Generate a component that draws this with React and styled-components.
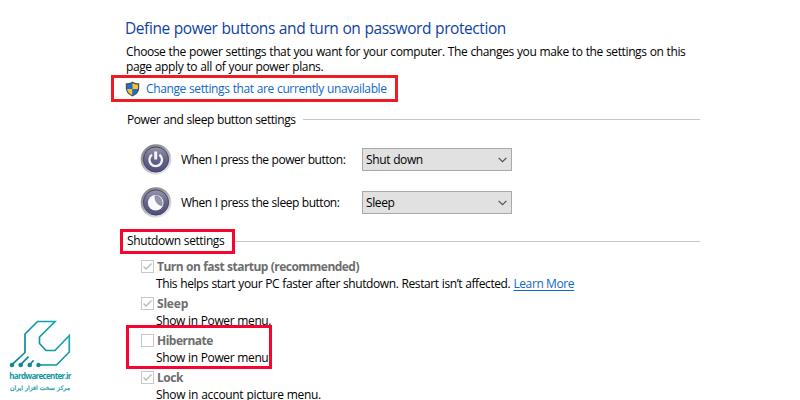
import React from 'react'
import styled, { createGlobalStyle } from 'styled-components'

const GlobalStyle = createGlobalStyle`
  body {
    margin: 0;
    background: #fff;
    overflow: hidden;
  }
`

const Page = styled.div`
  position: relative;
  box-sizing: border-box;
  width: 800px;
  height: 400px;
  padding: 16px 100px 0 126px;
  overflow: hidden;
  background: #fff;
  color: #000;
  font-family: 'Open Sans', 'Noto Sans', sans-serif;
  font-size: 12px;
  line-height: 15px;
  white-space: nowrap;
`

const Text = styled.span`
  letter-spacing: ${({ $track = -0.39 }) => $track}px;
  word-spacing: 0.4px;
`

const Title = styled.h1`
  margin: 0 0 0 -1px;
  height: 28px;
  color: #0f3f9f;
  font-size: 15.5px;
  font-weight: 400;
  line-height: 24px;
`

const Intro = styled.p`
  margin: 0;
  height: 31px;
`

const AdminLink = styled.a`
  display: flex;
  align-items: center;
  box-sizing: border-box;
  width: 287px;
  height: 27px;
  margin-left: -15px;
  padding-left: 11px;
  gap: 6px;
  border: 3px solid #ed1c24;
  color: #0f66cc;

  svg {
    flex-shrink: 0;
  }
`

const SectionTitle = styled.h2`
  display: flex;
  align-items: center;
  height: 16px;
  margin: ${({ $top }) => $top}px 0 0 1px;
  gap: ${({ $gap }) => $gap}px;
  font-size: 12px;
  font-weight: 400;

  &::after {
    content: '';
    flex: 1;
    height: 1px;
    background: #c6c6c6;
  }
`

const Highlighted = styled.span`
  box-sizing: border-box;
  height: 25px;
  width: 115px;
  margin-left: -7px;
  padding-left: 4px;
  border: 3px solid #f5052f;
  line-height: 18px;
`

const ButtonRow = styled.div`
  display: flex;
  align-items: center;
  height: 43px;
  padding-left: 14px;
`

const ButtonLabel = styled.span`
  width: 181px;
  margin-left: 9px;
`

const Select = styled.div`
  display: flex;
  align-items: center;
  justify-content: space-between;
  box-sizing: border-box;
  width: 150px;
  height: 23px;
  padding: 0 4px 0 3px;
  border: 1px solid #a9a9a9;
  background: #e1e1e1;
`

const ButtonList = styled.div`
  padding-top: 11px;
`

const Options = styled.div`
  padding: 9px 0 0 15px;
`

const Option = styled.div`
  position: relative;
  height: 37px;
`

const OptionHead = styled.div`
  display: flex;
  align-items: center;
  height: 17px;
  gap: 3px;
  color: #6d6d6d;
  font-weight: 700;
`

const OptionNote = styled.div`
  height: 17px;
  padding-left: 15px;
  line-height: 17px;
`

const Checkbox = styled.span`
  display: flex;
  box-sizing: border-box;
  width: 13px;
  height: 13px;
  border: 1px solid #c8c8c8;
`

const Marker = styled.div`
  position: absolute;
  top: -7px;
  left: -15px;
  box-sizing: border-box;
  width: 146px;
  height: 44px;
  border: 3px solid #f5052f;
`

const LearnMore = styled.a`
  color: #0f66cc;
  letter-spacing: -0.4px;
  text-decoration: underline;
  text-underline-offset: 2px;
`

const Watermark = styled.div`
  position: absolute;
  left: 8px;
  top: 318px;
  width: 64px;
  color: #0f97a5;
  text-align: center;
`

const SiteName = styled.div`
  height: 12px;
  margin-top: -1px;
  font-size: 8px;
  font-weight: 700;
  line-height: 12px;
  letter-spacing: -0.68px;
`

const SiteTagline = styled.div`
  font-family: 'DejaVu Sans', sans-serif;
  font-size: 6.2px;
  line-height: 12px;
  -webkit-text-stroke: 0.2px #0f97a5;
`

const Shield = () => (
  <svg width="15" height="16" viewBox="0 0 15 16">
    <path d="M7.5 .5C5.5 2 3 2.3.8 2.3V7c0 4 3 7 6.700 8.500 3.700-1.500 6.700-4.500 6.700-8.500V2.300C12 2.300 9.500 2 7.500.5z" fill="#4a4f55" />
    <path d="M7.500 2C6 3 4 3.500 2 3.500V8h5.500z" fill="#1a70cf" />
    <path d="M7.500 2C9 3 11 3.500 13 3.500V8H7.500z" fill="#fcc133" />
    <path d="M2 8c.3 3 2.500 5 5.500 6.300V8z" fill="#fcc133" />
    <path d="M13 8c-.3 3-2.500 5-5.500 6.300V8z" fill="#1a70cf" />
  </svg>
)

const Orb = ({ id, children }) => (
  <svg width="32" height="32" viewBox="0 0 32 32">
    <defs>
      <linearGradient id={`${id}-rim`} x1=".1" y1="0" x2=".7" y2="1">
        <stop offset="0" stopColor="#77777d" />
        <stop offset=".5" stopColor="#a8a8ae" />
        <stop offset="1" stopColor="#f0f0f4" />
      </linearGradient>
      <linearGradient id={`${id}-face`} x1="0" y1="0" x2="0" y2="1">
        <stop offset="0" stopColor="#9696ac" />
        <stop offset=".5" stopColor="#65658a" />
        <stop offset="1" stopColor="#4e4e79" />
      </linearGradient>
    </defs>
    <circle cx="16" cy="15.500" r="15.300" fill={`url(#${id}-rim)`} />
    <circle cx="16" cy="15.500" r="12.600" fill={`url(#${id}-face)`} stroke="#454566" />
    {children}
  </svg>
)

const PowerIcon = () => (
  <Orb id="power">
    <path d="M12 10.800a6.300 6.300 0 1 0 7.400 0" fill="none" stroke="#f4f4f8" strokeWidth="2.300" />
    <path d="M15.700 7.500v8" stroke="#f4f4f8" strokeWidth="3" />
  </Orb>
)

const SleepIcon = () => (
  <Orb id="sleep">
    <circle cx="15.700" cy="15.700" r="7.800" fill="#fafafc" />
    <path d="M15 9C19.500 8 23.300 13 21.800 18.800 17.800 18 14.500 14 15 9z" fill="#9696aa" stroke="#74748f" strokeWidth=".6" />
  </Orb>
)

const Chevron = () => (
  <svg width="9" height="6" viewBox="0 0 9 6">
    <path d="M.6.800 4.500 4.700 8.400.8" fill="none" stroke="#505050" strokeWidth="1.200" />
  </svg>
)

const Check = () => (
  <svg width="11" height="11" viewBox="0 0 11 11">
    <path d="M1.500 5.500 4 8l5.500-5.500" fill="none" stroke="#b9b9b9" strokeWidth="1.300" />
  </svg>
)

const Logo = () => (
  <svg width="64" height="50" viewBox="8 318 64 50">
    <defs>
      <linearGradient id="teal" gradientUnits="userSpaceOnUse" x1="10" y1="366" x2="70" y2="320">
        <stop offset="0" stopColor="#0c7d8e" />
        <stop offset="1" stopColor="#18aeb4" />
      </linearGradient>
    </defs>
    <g fill="none" stroke="url(#teal)" strokeWidth="1.700">
      <path d="M12 364.700 25 352.500V334l12.500-12.500H55L39.500 337v6.500l6.500 7h9L69.300 335.500V352L56.500 365H38.500" />
      <path d="M20.700 364.700l7.800-8M29.700 364.700l4-4.500" />
    </g>
    <g fill="#0e8796">
      <circle cx="12" cy="365" r="2.300" />
      <circle cx="20.700" cy="365" r="2.300" />
      <circle cx="29.700" cy="365" r="2.300" />
      <circle cx="38.500" cy="365" r="2.200" />
    </g>
  </svg>
)

const buttons = [
  { label: 'When I press the power button:', value: 'Shut down', Icon: PowerIcon },
  { label: 'When I press the sleep button:', value: 'Sleep', Icon: SleepIcon },
]

const options = [
  {
    name: 'Turn on fast startup (recommended)',
    note: 'This helps start your PC faster after shutdown. Restart isn’t affected.',
    checked: true,
    link: 'Learn More',
    track: -0.54,
    noteTrack: -0.41,
  },
  { name: 'Sleep', note: 'Show in Power menu.', checked: true, track: -0.2 },
  { name: 'Hibernate', note: 'Show in Power menu', marked: true, track: -0.5 },
  { name: 'Lock', note: 'Show in account picture menu.', checked: true, track: -0.45, noteTrack: -0.33 },
]

const App = () => (
  <Page>
    <GlobalStyle />
    <Title>
      <Text $track={-0.42}>Define power buttons and turn on password protection</Text>
    </Title>
    <Intro>
      <Text>Choose the power settings that you want for your computer. The changes you make to the settings on this</Text>
      <br />
      <Text>page apply to all of your power plans.</Text>
    </Intro>
    <AdminLink>
      <Shield />
      <Text>Change settings that are currently unavailable</Text>
    </AdminLink>
    <SectionTitle $top={9} $gap={7}>
      <Text $track={-0.43}>Power and sleep button settings</Text>
    </SectionTitle>
    <ButtonList>
      {buttons.map(({ label, value, Icon }) => (
        <ButtonRow key={label}>
          <Icon />
          <ButtonLabel>
            <Text $track={-0.48}>{label}</Text>
          </ButtonLabel>
          <Select>
            <Text>{value}</Text>
            <Chevron />
          </Select>
        </ButtonRow>
      ))}
    </ButtonList>
    <SectionTitle $top={9} $gap={0}>
      <Highlighted>
        <Text>Shutdown settings</Text>
      </Highlighted>
    </SectionTitle>
    <Options>
      {options.map(({ name, note, checked, link, marked, track, noteTrack }) => (
        <Option key={name}>
          <OptionHead>
            <Checkbox>{checked && <Check />}</Checkbox>
            <Text $track={track}>{name}</Text>
          </OptionHead>
          <OptionNote>
            <Text $track={noteTrack}>{note}</Text>
            {link && ' '}
            {link && <LearnMore>{link}</LearnMore>}
          </OptionNote>
          {marked && <Marker />}
        </Option>
      ))}
    </Options>
    <Watermark>
      <Logo />
      <SiteName>hardwarecenter.ir</SiteName>
      <SiteTagline dir="rtl">مرکز سخت افزار ایران</SiteTagline>
    </Watermark>
  </Page>
)

export default App
